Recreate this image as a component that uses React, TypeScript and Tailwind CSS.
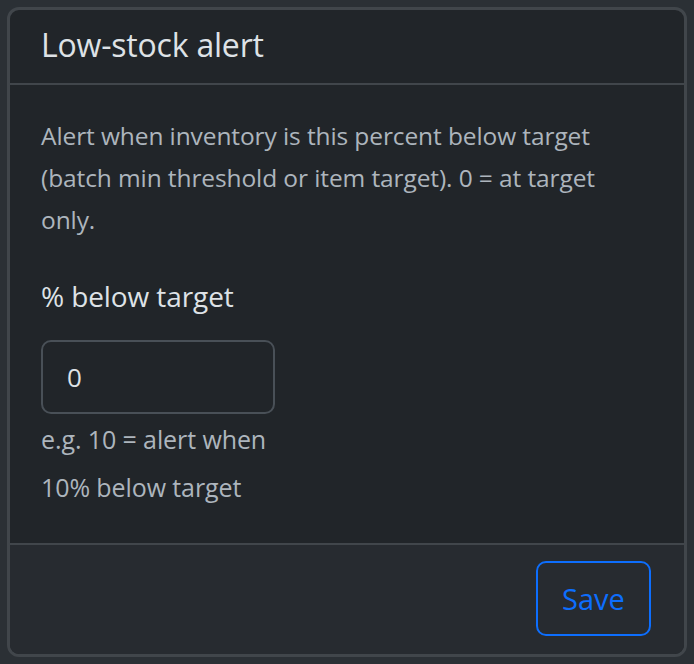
import React from 'react';

export default function App() {
  return (
    <div
      className="w-[694px] h-[664px] bg-[#2b3035] p-[7px]"
      style={{ fontFamily: '"Open Sans", "Noto Sans", sans-serif' }}
    >
      <div className="h-[650px] flex flex-col rounded-[12px] border-[3px] border-[#41464b] bg-[#212529] overflow-hidden">
        <div className="h-[75px] shrink-0 flex items-center px-[31px] pb-[4px] border-b-2 border-[#41464b]">
          <h1 className="text-[32px] leading-none text-[#dee2e6] tracking-[-0.2px]">Low-stock alert</h1>
        </div>

        <div className="flex-1 px-[31px] pt-[30px]">
          <p className="w-[600px] text-[24.5px] leading-[42px] text-[#adb5bd] tracking-[-0.1px]">
            Alert when inventory is this percent below target (batch min threshold or item target). 0 = at target only.
          </p>

          <label className="block mt-[35px] text-[28px] leading-[40px] text-[#dee2e6] tracking-[-0.1px]">% below target</label>

          <div className="mt-[24px] w-[234px] h-[74px] rounded-[10px] border-2 border-[#495057] flex items-center px-[24px]">
            <span className="text-[26px] text-[#dee2e6]">0</span>
          </div>

          <p className="mt-[1px] w-[234px] text-[25px] leading-[48px] text-[#adb5bd] tracking-[-0.1px]">
            e.g. 10 = alert when 10% below target
          </p>
        </div>

        <div className="h-[111px] shrink-0 flex items-center justify-end pl-[31px] pr-[33px] border-t-2 border-[#41464b] bg-[#272b30]">
          <button className="w-[115px] h-[75px] rounded-[10px] border-2 border-[#0d6efd] text-[#0d6efd] text-[29px] -mt-[2px]">
            Save
          </button>
        </div>
      </div>
    </div>
  );
}
